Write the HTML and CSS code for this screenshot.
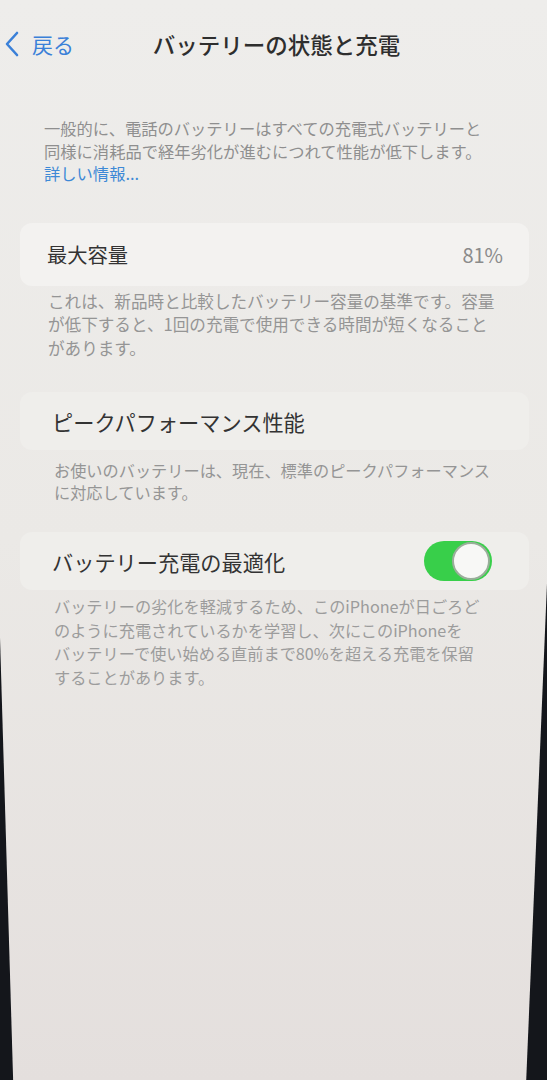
FILE: index.html
```html
<!DOCTYPE html>
<html lang="ja">
<head>
    <meta charset="UTF-8">
    <meta name="viewport" content="width=device-width, initial-scale=1.0">
    <title>バッテリーの状態と充電</title>
    <link rel="stylesheet" href="styles.css">
</head>
<body>
    <div class="screen">
        <header class="nav">
            <a class="back" href="#">
                <svg class="chevron" width="16" height="26" viewBox="0 0 16 26">
                    <path d="M13 2 L3 13 L13 24" fill="none" stroke="#3a80d8" stroke-width="2.6" stroke-linecap="round" stroke-linejoin="round"/>
                </svg>
                <span>戻る</span>
            </a>
            <h1>バッテリーの状態と充電</h1>
            <div></div>
        </header>

        <p class="intro">
            一般的に、電話のバッテリーはすべての充電式バッテリーと<br>
            同様に消耗品で経年劣化が進むにつれて性能が低下します。<br>
            <a href="#">詳しい情報...</a>
        </p>

        <section class="group group--first">
            <div class="cell cell--strong">
                <span class="label">最大容量</span>
                <span class="value">81%</span>
            </div>
            <p class="foot">
                これは、新品時と比較したバッテリー容量の基準です。容量<br>
                が低下すると、1回の充電で使用できる時間が短くなること<br>
                があります。
            </p>
        </section>

        <section class="group group--second">
            <div class="cell">
                <span class="label">ピークパフォーマンス性能</span>
            </div>
            <p class="foot foot--tight">
                お使いのバッテリーは、現在、標準のピークパフォーマンス<br>
                に対応しています。
            </p>
        </section>

        <section class="group group--third">
            <div class="cell">
                <span class="label">バッテリー充電の最適化</span>
                <span class="toggle"><span class="knob"></span></span>
            </div>
            <p class="foot">
                バッテリーの劣化を軽減するため、このiPhoneが日ごろど<br>
                のように充電されているかを学習し、次にこのiPhoneを<br>
                バッテリーで使い始める直前まで80%を超える充電を保留<br>
                することがあります。
            </p>
        </section>
    </div>
</body>
</html>
```

FILE: styles.css
```css
body {
    margin: 0;
    background: #14161b;
    font-family: "Noto Sans CJK JP", "Noto Sans", sans-serif;
}

.screen {
    min-height: 1080px;
    background: linear-gradient(#eeedeb, #ebe9e6 50%, #e4dfdd);
    clip-path: polygon(0 0, 100% 0, 100% 54%, 96.2% 100%, 2.4% 100%, 0 59%);
    overflow: hidden;
}

.nav {
    height: 88px;
    display: grid;
    grid-template-columns: 1fr auto 1fr;
    align-items: center;
}

.back {
    display: flex;
    align-items: center;
    gap: 12px;
    padding-left: 4px;
    color: #3a80d8;
    text-decoration: none;
    font-size: 21px;
}

.chevron {
    display: block;
}

.nav h1 {
    margin: 0;
    padding-left: 6px;
    font-size: 22.5px;
    font-weight: 500;
    color: #2e2e2e;
}

.intro {
    margin: 29px 0 0;
    padding-left: 44px;
    font-size: 16.3px;
    line-height: 22.5px;
    color: #8f8f8f;
}

.intro a {
    color: #3d89d6;
    text-decoration: none;
}

.group {
    margin: 0 18px 0 20px;
}

.group--first {
    margin-top: 38px;
}

.group--second {
    margin-top: 32px;
}

.group--third {
    margin-top: 29px;
}

.cell {
    display: flex;
    align-items: center;
    justify-content: space-between;
    height: 58px;
    padding: 0 37px 0 32px;
    border-radius: 12px;
    background: #efeeeb;
}

.cell--strong {
    height: 63px;
    padding: 0 26px 0 27px;
    background: #f3f2f0;
}

.label {
    font-size: 21.2px;
    color: #333;
}

.cell--strong .label {
    font-size: 20.3px;
}

.value {
    font-size: 20px;
    color: #8b8b8b;
}

.toggle {
    display: flex;
    justify-content: flex-end;
    align-items: center;
    width: 68px;
    height: 40px;
    padding: 0 2px;
    box-sizing: border-box;
    border-radius: 20px;
    background: #38cf4a;
}

.knob {
    width: 34px;
    height: 34px;
    border-radius: 50%;
    border: 2px solid #9aae9a;
    background: #f8f8f6;
}

.foot {
    margin: 4px 0 0;
    padding-left: 28px;
    font-size: 16.6px;
    line-height: 23.5px;
    color: #959595;
}

.group--second .foot,
.group--third .foot {
    padding-left: 34px;
    font-size: 16.2px;
}

.foot--tight {
    margin-top: 9px;
    line-height: 22px;
}

.group--third .foot {
    margin-top: 5px;
    line-height: 23.7px;
    color: #9c9c9c;
}
```
